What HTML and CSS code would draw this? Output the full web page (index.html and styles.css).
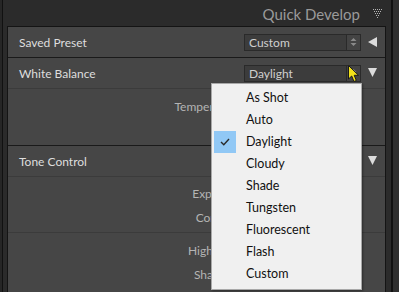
FILE: index.html
```html
<!DOCTYPE html>
<html>
<head>
<meta charset="utf-8">
<link rel="stylesheet" href="styles.css">
</head>
<body>
<div class="app">
  <div class="lg1"></div>
  <div class="lg2"></div>
  <div class="col">
    <div class="header">
      <span class="title">Quick Develop</span>
      <svg class="solo" width="9" height="9" viewBox="0 0 9 9">
        <g fill="#b4b4b4">
          <rect x="0" y="0" width="1" height="1"/><rect x="2" y="0" width="1" height="1"/><rect x="4" y="0" width="1" height="1"/><rect x="6" y="0" width="1" height="1"/><rect x="8" y="0" width="1" height="1"/>
          <rect x="1" y="2" width="1" height="1"/><rect x="3" y="2" width="1" height="1"/><rect x="5" y="2" width="1" height="1"/><rect x="7" y="2" width="1" height="1"/>
          <rect x="2" y="4" width="1" height="1"/><rect x="4" y="4" width="1" height="1"/><rect x="6" y="4" width="1" height="1"/>
          <rect x="3" y="6" width="1" height="1"/><rect x="5" y="6" width="1" height="1"/>
          <rect x="4" y="8" width="1" height="1"/>
        </g>
      </svg>
    </div>
    <div class="panel">
      <div class="row sep-dark">
        <span class="label">Saved Preset</span>
        <div class="select"><span class="val">Custom</span><span class="step"><svg width="7" height="10" viewBox="0 0 7 10"><path d="M0.5 4 L3.5 1 L6.5 4 Z M0.5 6 L3.5 9 L6.5 6 Z" fill="#8a8a8a"/></svg></span></div>
        <svg class="tri" width="9" height="10" viewBox="0 0 9 10"><path d="M0 5 L9 0 L9 10 Z" fill="#dcdcdc"/></svg>
      </div>
      <div class="row sep-light">
        <span class="label">White Balance</span>
        <div class="select"><span class="val">Daylight</span><span class="step"><svg width="7" height="10" viewBox="0 0 7 10"><path d="M0.5 4 L3.5 1 L6.5 4 Z M0.5 6 L3.5 9 L6.5 6 Z" fill="#8a8a8a"/></svg></span></div>
        <svg class="tri" width="9" height="10" viewBox="0 0 9 10"><path d="M0 0 L9 0 L4.5 9 Z" fill="#dcdcdc"/></svg>
      </div>
      <div class="sub sub-wb sep-dark">
        <div class="subrow"><span class="sublabel">Temperature</span></div>
        <div class="subrow"><span class="sublabel">Tint</span></div>
      </div>
      <div class="row sep-light">
        <span class="label">Tone Control</span>
        <svg class="tri" width="9" height="10" viewBox="0 0 9 10"><path d="M0 0 L9 0 L4.5 9 Z" fill="#dcdcdc"/></svg>
      </div>
      <div class="sub sub-tone sep-light">
        <div class="subrow"><span class="sublabel">Exposure</span></div>
        <div class="subrow"><span class="sublabel">Contrast</span></div>
      </div>
      <div class="sub sub-hl">
        <div class="subrow"><span class="sublabel">Highlights</span></div>
        <div class="subrow"><span class="sublabel">Shadows</span></div>
      </div>
    </div>
  </div>
  <div class="rg1"></div>
  <div class="rg2"></div>
</div>

<div class="menu">
  <div class="item">As Shot</div>
  <div class="item">Auto</div>
  <div class="item checked"><span class="check"><svg width="10" height="8" viewBox="0 0 10 8"><path d="M1 4 L3.8 6.8 L9 1" fill="none" stroke="#2a2a2a" stroke-width="1.4"/></svg></span>Daylight</div>
  <div class="item">Cloudy</div>
  <div class="item">Shade</div>
  <div class="item">Tungsten</div>
  <div class="item">Fluorescent</div>
  <div class="item">Flash</div>
  <div class="item">Custom</div>
</div>

<svg class="cursor" width="12" height="18" viewBox="0 0 12 18">
  <path d="M0.5 0.5 L0.5 14 L3.7 11 L6 16.5 L8.3 15.5 L6.2 10.3 L10.5 10.3 Z" fill="#f2e21a" stroke="#1a1a1a" stroke-width="1"/>
</svg>
</body>
</html>
```
FILE: styles.css
```css
html, body {
  margin: 0;
  padding: 0;
}
body {
  width: 399px;
  height: 292px;
  overflow: hidden;
  background: #2b2b2b;
  font-family: "Lato", "Liberation Sans", sans-serif;
  position: relative;
}
.app {
  display: flex;
  height: 292px;
}
.lg1 { width: 2px; background: #262626; }
.lg2 { width: 1px; background: #111; }
.rg1 { width: 2px; background: #111; }
.rg2 { width: 6px; background: #2f2f2f; }
.col {
  width: 379px;
  padding: 0 5px 0 4px;
  display: flex;
  flex-direction: column;
  background: #2b2b2b;
}
.header {
  height: 26px;
  display: flex;
  align-items: center;
  justify-content: flex-end;
  padding-right: 4px;
}
.title {
  font-size: 15px;
  font-weight: 400;
  color: #9a9a9a;
  margin-top: 2px;
}
.solo {
  margin-left: 13px;
  margin-top: 1px;
}
.panel {
  flex: 1;
  background: #464646;
  border: 1px solid #141414;
  border-bottom: none;
}
.row {
  height: 30px;
  display: flex;
  align-items: center;
  padding: 0 8px 0 11px;
}
.sep-dark { border-bottom: 1px solid #1a1a1a; }
.sep-light { border-bottom: 1px solid #3b3b3b; }
.label {
  flex: 1;
  font-size: 12px;
  color: #dedede;
}
.select {
  width: 115px;
  height: 15px;
  border: 1px solid #2a2a2a;
  background: #3c3c3c;
  display: flex;
  align-items: center;
  margin-right: 7px;
}
.val {
  flex: 1;
  font-size: 12px;
  color: #cfcfcf;
  padding-left: 4px;
}
.step {
  width: 13px;
  height: 15px;
  border-left: 1px solid #2a2a2a;
  display: flex;
  align-items: center;
  justify-content: center;
  background: #444;
}
.tri { display: block; }
.sub-wb { height: 57px; padding-top: 6px; box-sizing: border-box; }
.sub-tone { height: 56px; padding-top: 4px; box-sizing: border-box; }
.sub-hl { padding-top: 5px; }
.sub-wb .subrow { height: 22px; }
.subrow {
  height: 24px;
  display: flex;
  align-items: center;
}
.sublabel {
  width: 233px;
  text-align: right;
  font-size: 12px;
  color: #b4b4b4;
}
.menu {
  position: absolute;
  left: 211px;
  top: 83px;
  width: 149px;
  height: 202px;
  padding-top: 3px;
  box-sizing: content-box;
  background: #f0f0f0;
  border: 1px solid #a8a8a8;
  box-shadow: 1px 1px 2px rgba(0,0,0,0.35);
}
.item {
  height: 22px;
  line-height: 22px;
  padding-left: 34px;
  font-size: 12.5px;
  color: #111;
  position: relative;
}
.check {
  position: absolute;
  left: 2px;
  top: 0;
  width: 22px;
  height: 22px;
  background: #91c8f5;
  display: flex;
  align-items: center;
  justify-content: center;
}
.cursor {
  position: absolute;
  left: 348px;
  top: 65px;
}
```
